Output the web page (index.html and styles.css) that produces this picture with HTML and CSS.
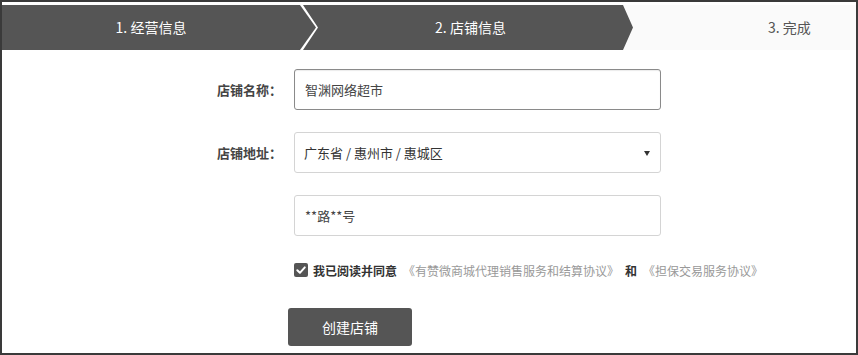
FILE: index.html
```html
<!DOCTYPE html>
<html lang="zh-CN">
<head>
<meta charset="utf-8">
<title>创建店铺</title>
<link rel="stylesheet" href="styles.css">
</head>
<body>
<div class="frame">
  <div class="steps">
    <div class="step step-1">1. 经营信息</div>
    <div class="step step-2">2. 店铺信息</div>
    <div class="step step-3">3. 完成</div>
  </div>
  <div class="form">
    <div class="row">
      <label class="label">店铺名称：</label>
      <div class="field field-focus">智渊网络超市</div>
    </div>
    <div class="row">
      <label class="label">店铺地址：</label>
      <div class="field field-select">广东省 / 惠州市 / 惠城区<span class="caret"></span></div>
    </div>
    <div class="row">
      <span class="label"></span>
      <div class="field">**路**号</div>
    </div>
    <div class="row row-agree">
      <span class="label"></span>
      <div class="agree">
        <span class="checkbox"><svg width="14" height="14" viewBox="0 0 14 14"><path d="M3.3 7.2 L5.9 9.8 L10.8 4.4" fill="none" stroke="#fff" stroke-width="2" stroke-linecap="round" stroke-linejoin="round"/></svg></span>
        <span class="strong">我已阅读并同意</span>
        <span class="link">《有赞微商城代理销售服务和结算协议》</span>
        <span class="strong">和</span>
        <span class="link">《担保交易服务协议》</span>
      </div>
    </div>
    <div class="row-btn">
      <button class="btn">创建店铺</button>
    </div>
  </div>
</div>
</body>
</html>
```
FILE: styles.css
```css
html, body {
  margin: 0;
  padding: 0;
  background: #fff;
}
body {
  font-family: "Noto Sans CJK SC", "Noto Sans", sans-serif;
  color: #333;
}
.frame {
  box-sizing: border-box;
  width: 858px;
  height: 355px;
  border: 2px solid #3a3a3a;
  overflow: hidden;
}
.steps {
  display: flex;
  height: 45px;
  margin-top: 3px;
  background: #fff;
}
.step {
  height: 45px;
  line-height: 45px;
  font-size: 14px;
  box-sizing: border-box;
  white-space: nowrap;
}
.step-1 {
  width: 316px;
  flex: none;
  background: #555;
  color: #fff;
  text-align: center;
  padding-right: 18px;
  clip-path: polygon(0 0, 298px 0, 314px 50%, 298px 100%, 0 100%);
}
.step-2 {
  width: 330px;
  flex: none;
  margin-left: -15px;
  background: #555;
  color: #fff;
  text-align: center;
  padding-left: 15px;
  padding-right: 10px;
  position: relative;
  z-index: 1;
  clip-path: polygon(0 0, 320px 0, 330px 50%, 320px 100%, 0 100%, 15px 50%);
}
.step-3 {
  flex: 1;
  margin-left: -10px;
  background: #fafafa;
  color: #555;
  padding-left: 145px;
}
.form {
  margin-top: 19px;
}
.row {
  display: flex;
  align-items: center;
  margin-left: 180px;
  margin-bottom: 22px;
}
.label {
  width: 100px;
  flex: none;
  text-align: right;
  font-size: 13px;
  font-weight: bold;
  color: #444;
  margin-right: 12px;
}
.field {
  box-sizing: border-box;
  width: 367px;
  height: 41px;
  line-height: 39px;
  border: 1px solid #d4d4d4;
  border-radius: 3px;
  padding-left: 10px;
  font-size: 13px;
  color: #444;
  position: relative;
}
.field-focus {
  border-color: #8a8a8a;
  box-shadow: inset 0 1px 1px rgba(0,0,0,0.08);
}
.field-select {
  padding-left: 9px;
  color: #333;
}
.caret {
  position: absolute;
  right: 10px;
  top: 18px;
  width: 0;
  height: 0;
  border-left: 3.5px solid transparent;
  border-right: 3.5px solid transparent;
  border-top: 5px solid #333;
}
.row-agree {
  margin-top: 24px;
  margin-bottom: 28px;
  height: 20px;
}
.agree {
  display: flex;
  align-items: center;
  font-size: 12px;
  white-space: nowrap;
}
.checkbox {
  width: 14px;
  height: 14px;
  border-radius: 2px;
  background: #555;
  margin-right: 5px;
  display: inline-flex;
}
.strong {
  font-weight: bold;
  color: #333;
}
.link {
  color: #999;
  margin: 0 6px;
}
.row-btn {
  margin-left: 286px;
}
.btn {
  width: 124px;
  height: 38px;
  border: 0;
  border-radius: 3px;
  background: #555;
  color: #fff;
  font-family: "Noto Sans CJK SC", "Noto Sans", sans-serif;
  font-size: 14px;
  padding: 0;
}
```
